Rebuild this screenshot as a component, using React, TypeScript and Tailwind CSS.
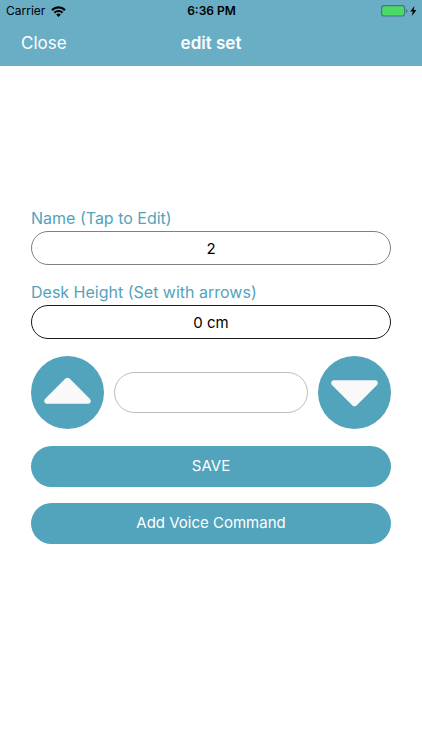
import { useState } from 'react';

function WifiIcon() {
  return (
    <svg width="15" height="11" viewBox="0 0 15 11" fill="none" aria-hidden="true">
      <path d="M1 4.100a9.300 9.300 0 0 1 13 0" stroke="#000" strokeWidth="2.200" />
      <path d="M3.400 6.700a5.800 5.800 0 0 1 8.200 0" stroke="#000" strokeWidth="2" />
      <path d="M7.500 10.900 5.200 8.600a3.300 3.300 0 0 1 4.600 0Z" fill="#000" />
    </svg>
  );
}

function BatteryIcon() {
  return (
    <svg width="36" height="12" viewBox="0 0 36 12" aria-hidden="true">
      <rect x="0.6" y="0.6" width="23" height="10.4" rx="2.4" fill="#4cd964" stroke="#41758a" strokeWidth="1.1" />
      <path d="M25 4v4c.9-.3 1.4-1.1 1.4-2S25.900 4.300 25 4Z" fill="#41758a" />
      <path d="M33.400 1 29.300 6.600h2.500L30.900 11l4.500-5.900h-2.700Z" fill="#000" />
    </svg>
  );
}

function Triangle({ className = '' }: { className?: string }) {
  return (
    <svg width="47" height="28" viewBox="0 0 48 28" className={className} aria-hidden="true">
      <path
        d="M21.900 1.300Q24-.5 26.100 1.300L47 22.200C48.700 24.200 47.600 27 45 27H3C.4 27-.7 24.200 1 22.200Z"
        fill="#f9f9f9"
      />
    </svg>
  );
}

const roundButton =
  'flex size-[73px] shrink-0 items-center justify-center rounded-full bg-[#52a3bc]';
const wideButton = 'h-[41px] w-full rounded-full bg-[#52a3bc] text-[15px] text-white';
const field =
  'h-[34px] w-full rounded-full border bg-white text-center text-[15px] text-black outline-none';
const label = 'text-base leading-[26px] text-[#52a3bc]';

export default function App() {
  const [name, setName] = useState('2');
  const [height, setHeight] = useState(0);

  return (
    <div className="min-h-screen bg-white font-['Inter',sans-serif]">
      <header className="bg-[#69aec5]">
        <div className="grid h-[22px] grid-cols-3 items-center pr-[5px] pl-[6px] text-xs text-black">
          <div className="flex items-center gap-[6px]">
            <span>Carrier</span>
            <WifiIcon />
          </div>
          <span className="text-center font-semibold">6:36 PM</span>
          <div className="flex justify-end">
            <BatteryIcon />
          </div>
        </div>
        <nav className="grid h-11 grid-cols-3 items-center px-[21px] text-[17px] text-white">
          <button type="button" className="justify-self-start">
            Close
          </button>
          <h1 className="text-center font-semibold">edit set</h1>
        </nav>
      </header>

      <main className="px-[31px] pt-[139px]">
        <div className="flex flex-col">
          <label htmlFor="name" className={label}>
            Name (Tap to Edit)
          </label>
          <input
            id="name"
            value={name}
            onChange={(e) => setName(e.target.value)}
            className={`${field} border-[#808080]`}
          />
        </div>

        <div className="mt-[14px] flex flex-col">
          <label htmlFor="height" className={label}>
            Desk Height (Set with arrows)
          </label>
          <input id="height" value={`${height} cm`} readOnly className={`${field} border-[#1a1a1a]`} />
        </div>

        <div className="mt-[17px] flex items-center gap-[10px]">
          <button type="button" aria-label="Raise desk" className={roundButton} onClick={() => setHeight(height + 1)}>
            <Triangle className="-mt-1" />
          </button>
          <input
            aria-label="Desk position"
            className="h-[41px] min-w-0 flex-1 rounded-full border border-[#bdbdbd] bg-white px-4 text-center text-[15px] outline-none"
          />
          <button
            type="button"
            aria-label="Lower desk"
            className={roundButton}
            onClick={() => setHeight(Math.max(0, height - 1))}
          >
            <Triangle className="rotate-180" />
          </button>
        </div>

        <div className="mt-[17px] flex flex-col gap-4">
          <button type="button" className={wideButton}>
            SAVE
          </button>
          <button type="button" className={wideButton}>
            Add Voice Command
          </button>
        </div>
      </main>
    </div>
  );
}
